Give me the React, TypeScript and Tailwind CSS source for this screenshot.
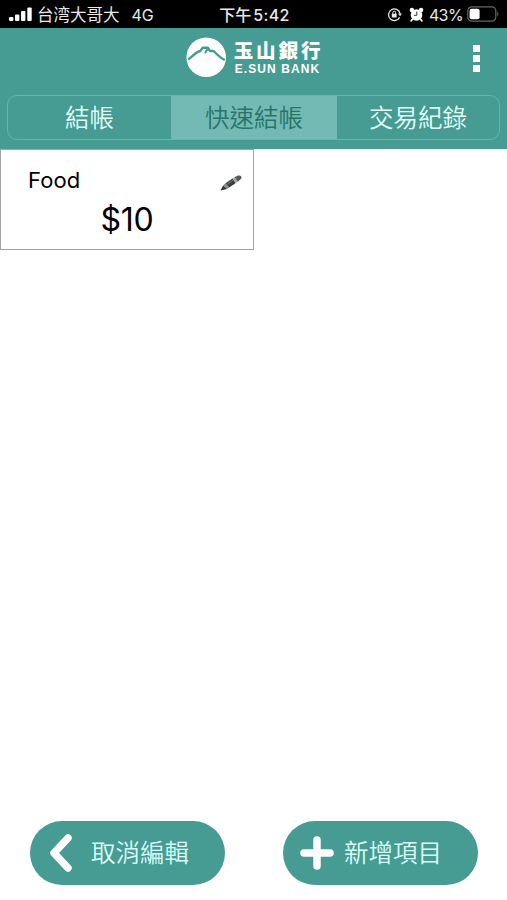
import React from 'react';

const tabs = [
  { id: 'checkout', label: '結帳' },
  { id: 'quick', label: '快速結帳' },
  { id: 'history', label: '交易紀錄' },
];

const items = [{ name: 'Food', price: 10 }];

function StatusBar() {
  return (
    <div className="flex h-7 shrink-0 items-center bg-black text-[#e8e8e8]">
      <div className="flex flex-1 items-center pl-[9px]">
        <svg width="23" height="15" viewBox="0 0 23 15" fill="#fff">
          <rect x="0" y="10" width="4.4" height="4" rx="1" />
          <rect x="6" y="7.5" width="4.4" height="6.5" rx="1" />
          <rect x="12" y="4" width="4.4" height="10" rx="1" />
          <rect x="18.3" y="0.5" width="4.4" height="13.5" rx="1" />
        </svg>
        <span className="ml-[5px] pt-px text-[16.5px] leading-7">台湾大哥大</span>
        <span className="ml-3 pt-px text-base leading-7">4G</span>
      </div>
      <div className="flex items-center pt-px text-base leading-7 font-medium">
        <span>下午</span>
        <span className="ml-0.5 tracking-[0.3px]">5:42</span>
      </div>
      <div className="flex flex-1 items-center justify-end pr-[7px]">
        <svg width="15" height="15" viewBox="0 0 15 15" fill="none" stroke="#e8e8e8" strokeWidth="1.3">
          <path d="M12.6 10.2A5.8 5.8 0 1 1 13 6.5" />
          <path d="M11 6.5h4l-2 2.8z" fill="#e8e8e8" stroke="none" />
          <rect x="4.8" y="6.8" width="4.8" height="3.6" rx="0.5" fill="#e8e8e8" stroke="none" />
          <path d="M5.8 7V5.6a1.4 1.4 0 0 1 2.8 0V7" strokeWidth="1" />
        </svg>
        <svg className="ml-[7px]" width="15" height="15" viewBox="0 0 15 15" fill="#fff">
          <circle cx="7.5" cy="8" r="5.8" />
          <circle cx="2.9" cy="3" r="2.2" />
          <circle cx="12.1" cy="3" r="2.2" />
          <path d="M3.5 12l-1.4 2M11.5 12l1.4 2" stroke="#fff" strokeWidth="1.6" strokeLinecap="round" />
          <path d="M7.8 4.5v3.8H5" stroke="#333" strokeWidth="1" fill="none" />
        </svg>
        <span className="ml-[5px] pt-px text-base leading-7 tracking-[-0.6px]">43%</span>
        <svg className="ml-1" width="33" height="16" viewBox="0 0 33 16" fill="none">
          <rect x="0.8" y="0.8" width="28" height="14.4" rx="4" stroke="#666" strokeWidth="1.2" />
          <rect x="2.6" y="2.8" width="10" height="10.4" rx="2" fill="#fff" />
          <path d="M30.4 5.5q2 2.5 0 5z" fill="#777" />
        </svg>
      </div>
    </div>
  );
}

function Logo() {
  return (
    <div className="flex items-center pl-[2px]">
      <svg width="41" height="41" viewBox="0 0 41 41">
        <circle cx="20.2" cy="20.3" r="19.8" fill="#fff" />
        <path
          d="M2.2 22.6C6 20.2 9.5 15 14.3 14L16.7 10.8H21.8L24 14H27.6C31 17.5 34.5 21 38.8 23"
          fill="none"
          stroke="#469b92"
          strokeWidth="2.4"
          strokeLinejoin="round"
        />
        <path d="M22.5 12.5C20.8 12.8 19.8 14 19.2 16.4" fill="none" stroke="#469b92" strokeWidth="1.8" />
      </svg>
      <div className="ml-[7px] flex flex-col pt-px text-white">
        <span className="text-[19.5px] leading-[22px] font-black tracking-[2.9px]">玉山銀行</span>
        <span className="mt-px pl-[1px] font-['Liberation_Sans',sans-serif] text-[12px] leading-[13px] font-bold tracking-[1.1px]">
          E.SUN BANK
        </span>
      </div>
    </div>
  );
}

function Header({ active }: { active: string }) {
  return (
    <header className="flex h-[121px] shrink-0 flex-col bg-[#469b92]">
      <div className="grid h-[67px] grid-cols-[1fr_auto_1fr] items-start pt-[9px]">
        <div />
        <Logo />
        <button className="mt-2 mr-[27px] flex flex-col gap-[3px] justify-self-end">
          <span className="size-[7px] bg-white" />
          <span className="size-[7px] bg-white" />
          <span className="size-[7px] bg-white" />
        </button>
      </div>
      <nav className="mr-[7px] ml-[7px] grid h-[45px] grid-cols-[163px_166px_1fr] overflow-hidden rounded-[10px] border border-[#6ab4ac]">
        {tabs.map((tab) => (
          <button
            key={tab.id}
            className={`flex items-center justify-center pt-px text-[24.5px] font-[350] ${
              tab.id === active ? 'bg-[#72bab3] text-[#28746b]' : 'text-[#e2fffb]'
            }`}
          >
            {tab.label}
          </button>
        ))}
      </nav>
    </header>
  );
}

function PencilIcon() {
  return (
    <svg width="22" height="16" viewBox="0 0 22 16">
      <path d="M0.5 15.5L3.2 10.2L7 14Z" fill="#333" />
      <path d="M3.2 10.2L5.6 8.3L9.3 12.4L7 14Z" fill="#888" />
      <path d="M5.6 8.3L12.5 3.6L15.8 8L9.3 12.4Z" fill="#3c3f42" />
      <path d="M12.5 3.6L14.5 2.3L17.8 6.8L15.8 8Z" fill="#aaa" />
      <path d="M14.5 2.3L18 0.6Q22 0 21.4 3.4L17.8 6.8Z" fill="#55585a" />
      <path d="M7.5 9L17 2.8" stroke="#8a8a8a" strokeWidth="0.8" />
    </svg>
  );
}

function ItemCard({ name, price }: { name: string; price: number }) {
  return (
    <div className="h-[101px] w-[254px] border border-[#a3a3a3] font-[Inter,sans-serif] text-black">
      <div className="mt-[14px] flex items-center justify-between pr-[11px] pl-[27px]">
        <span className="text-[22px] leading-8 tracking-[0.1px]">{name}</span>
        <span className="mt-[6px]">
          <PencilIcon />
        </span>
      </div>
      <p className="mt-[4px] text-center text-[32px] leading-10 tracking-[-0.2px]">${price}</p>
    </div>
  );
}

export default function App() {
  return (
    <div className="flex h-[900px] w-[507px] flex-col overflow-hidden bg-white font-[Inter,'Noto_Sans_CJK_TC',sans-serif]">
      <StatusBar />
      <Header active="quick" />
      <main className="flex-1">
        {items.map((item) => (
          <ItemCard key={item.name} name={item.name} price={item.price} />
        ))}
      </main>
      <footer className="flex justify-between pr-[29px] pb-[15px] pl-[30px] text-[24.5px] font-[350] text-[#d8fffa]">
        <button className="flex h-16 w-[195px] items-center rounded-full bg-[#469b92] pl-[19px]">
          <svg width="24" height="40" viewBox="0 0 24 40" fill="none" stroke="#fff" strokeWidth="7.5" strokeLinecap="round" strokeLinejoin="round">
            <path d="M19 5L5 20L19 35" />
          </svg>
          <span className="ml-[18px] pt-px">取消編輯</span>
        </button>
        <button className="flex h-16 w-[195px] items-center rounded-full bg-[#469b92] pl-[17px]">
          <svg width="34" height="34" viewBox="0 0 34 34" stroke="#fff" strokeWidth="7.5" strokeLinecap="round">
            <path d="M17 4V30M4 17H30" />
          </svg>
          <span className="ml-[10px] pt-px">新增項目</span>
        </button>
      </footer>
    </div>
  );
}
